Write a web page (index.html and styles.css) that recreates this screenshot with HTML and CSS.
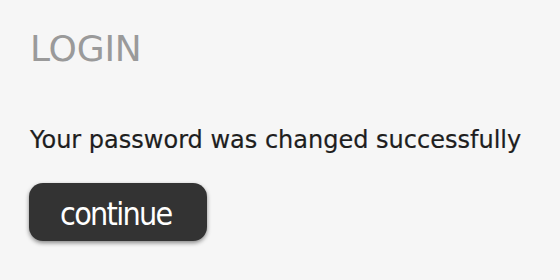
FILE: index.html
```html
<!DOCTYPE html>
<html>
<head>
<meta charset="utf-8">
<link rel="stylesheet" href="styles.css">
</head>
<body>
<div class="page">
  <h1 class="title">LOGIN</h1>
  <p class="message">Your password was changed successfully</p>
  <button class="btn" type="button">continue</button>
</div>
</body>
</html>
```
FILE: styles.css
```css
html, body {
  margin: 0;
  padding: 0;
  background: #f6f6f6;
}
body {
  font-family: "DejaVu Sans", Verdana, sans-serif;
  width: 560px;
  height: 280px;
  overflow: hidden;
}
.page {
  display: flex;
  flex-direction: column;
  align-items: flex-start;
  padding: 31px 0 0 30px;
}
.title {
  margin: 0;
  font-size: 36px;
  line-height: 36px;
  font-weight: normal;
  color: #9a9a9a;
  letter-spacing: -0.2px;
}
.message {
  margin: 61px 0 0;
  font-size: 24px;
  line-height: 24px;
  color: #1e1e1e;
  -webkit-text-stroke: 0.2px #1e1e1e;
}
.btn {
  margin: 31px 0 0 -1px;
  box-sizing: border-box;
  width: 178px;
  height: 58px;
  padding: 3px 0 0 31px;
  text-align: left;
  border: none;
  border-radius: 14px;
  background: #333333;
  color: #ffffff;
  font-family: "DejaVu Sans Condensed", "DejaVu Sans", Verdana, sans-serif;
  font-size: 32px;
  line-height: 54px;
  letter-spacing: -1.7px;
  box-shadow: 0 2px 4px rgba(0, 0, 0, 0.45);
}
```
